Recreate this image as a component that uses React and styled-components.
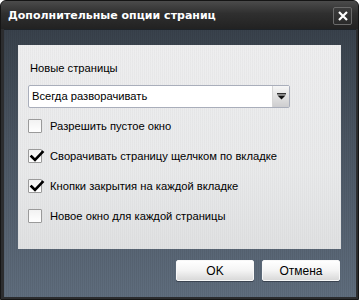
import React from "react";
import styled, { createGlobalStyle } from "styled-components";

const Global = createGlobalStyle`
  html, body {
    margin: 0;
    padding: 0;
    background: #ffffff;
  }
  body {
    font-family: "Liberation Sans", Arial, sans-serif;
  }
`;

let Window = styled.div`
  width: 359px;
  height: 300px;
  box-sizing: border-box;
  display: flex;
  flex-direction: column;
  background: #2c2d2f;
  border: 1px solid #151515;
  border-radius: 6px 6px 0 0;
  overflow: hidden;
`;

let TitleBar = styled.div`
  height: 28px;
  flex: none;
  display: flex;
  align-items: center;
  justify-content: space-between;
  padding: 0 6px 0 7px;
  background: linear-gradient(#4b4b4b, #2f2f2f 45%, #222222);
  color: #ffffff;
  font-family: "DejaVu Sans", Verdana, sans-serif;
  font-weight: bold;
  font-size: 11px;
`;

let CloseButton = styled.button`
  width: 19px;
  height: 18px;
  margin-top: 2px;
  padding: 0;
  display: flex;
  align-items: center;
  justify-content: center;
  background: linear-gradient(#3c3c3c, #2a2a2a);
  border: 1px solid #6a6a6a;
  border-radius: 2px;
`;

let Body = styled.div`
  flex: 1;
  margin: 0 2px 3px 3px;
  display: flex;
  flex-direction: column;
  padding: 15px 15px 16px 14px;
  border-top: 1px solid #1c2228;
  background:
    repeating-linear-gradient(90deg, rgba(0, 0, 0, 0.06) 0 1px, transparent 1px 2px),
    linear-gradient(#39424c, #4a5562 40%, #5f6d7d);
`;

let Panel = styled.div`
  height: 204px;
  box-sizing: border-box;
  padding: 15px 10px 0 10px;
  background:
    repeating-linear-gradient(90deg, rgba(0, 0, 0, 0.025) 0 1px, transparent 1px 2px),
    linear-gradient(#eeeeef, #e9eaeb 60%, #e0e1e2);
  display: flex;
  flex-direction: column;
  font-size: 11.2px;
  color: #000000;
`;

let Label = styled.div`
  height: 16px;
  line-height: 16px;
  margin-bottom: 9px;
  padding-left: 2px;
`;

let Select = styled.div`
  width: 262px;
  height: 23px;
  box-sizing: border-box;
  display: flex;
  border: 1px solid #a9aebb;
  border-radius: 2px;
  background: #ffffff;
  margin-bottom: 3px;
`;

let SelectValue = styled.div`
  flex: 1;
  padding-left: 3px;
  line-height: 21px;
`;

let SelectArrow = styled.div`
  width: 16px;
  display: flex;
  align-items: center;
  justify-content: center;
  border-left: 1px solid #d6d6d6;
  background: linear-gradient(#f6f6f6, #e2e2e2 50%, #cdcdcf);
`;

let Row = styled.div`
  height: 30px;
  display: flex;
  align-items: center;
  gap: 8px;
`;

let Box = styled.div`
  width: 14px;
  height: 14px;
  box-sizing: border-box;
  border: 1px solid #9a9a9a;
  border-radius: 1px;
  background: linear-gradient(#f2f2f2, #ffffff);
  position: relative;
`;

let Footer = styled.div`
  margin-top: 11px;
  display: flex;
  justify-content: flex-end;
  gap: 8px;
  padding-right: 1px;
`;

let Button = styled.button`
  width: 78px;
  height: 21px;
  padding: 0;
  font-family: "Liberation Sans", Arial, sans-serif;
  font-size: 12px;
  color: #000000;
  border: 1px solid #f8f8f8;
  border-radius: 2px;
  background: linear-gradient(#ffffff, #f4f4f4 50%, #d9d9d9);
  box-shadow: 0 1px 0 #3a4350;
`;

const Check = () => (
  <svg width="16" height="14" viewBox="0 0 16 14" style={{ position: "absolute", left: 0, top: -1 }}>
    <path d="M2.5 7.5 L6 11 L13.5 3" fill="none" stroke="#000" strokeWidth="2.6" strokeLinecap="square" />
  </svg>
);

let Option = ({ checked, children }) => (
  <Row>
    <Box>{checked && <Check />}</Box>
    <span>{children}</span>
  </Row>
);

export default function App() {
  return (
    <>
      <Global />
      <Window>
        <TitleBar>
          <span>Дополнительные опции страниц</span>
          <CloseButton>
            <svg width="12" height="12" viewBox="0 0 12 12">
              <path d="M2 2 L10 10 M10 2 L2 10" stroke="#fff" strokeWidth="2.2" />
            </svg>
          </CloseButton>
        </TitleBar>
        <Body>
          <Panel>
            <Label>Новые страницы</Label>
            <Select>
              <SelectValue>Всегда разворачивать</SelectValue>
              <SelectArrow>
                <svg width="9" height="7" viewBox="0 0 9 7">
                  <rect x="0" y="0" width="9" height="1.5" fill="#333" />
                  <path d="M0.5 2.5 H8.5 L4.5 6.5 Z" fill="#111" />
                </svg>
              </SelectArrow>
            </Select>
            <Option>Разрешить пустое окно</Option>
            <Option checked>Сворачивать страницу щелчком по вкладке</Option>
            <Option checked>Кнопки закрытия на каждой вкладке</Option>
            <Option>Новое окно для каждой страницы</Option>
          </Panel>
          <Footer>
            <Button>OK</Button>
            <Button>Отмена</Button>
          </Footer>
        </Body>
      </Window>
    </>
  );
}
